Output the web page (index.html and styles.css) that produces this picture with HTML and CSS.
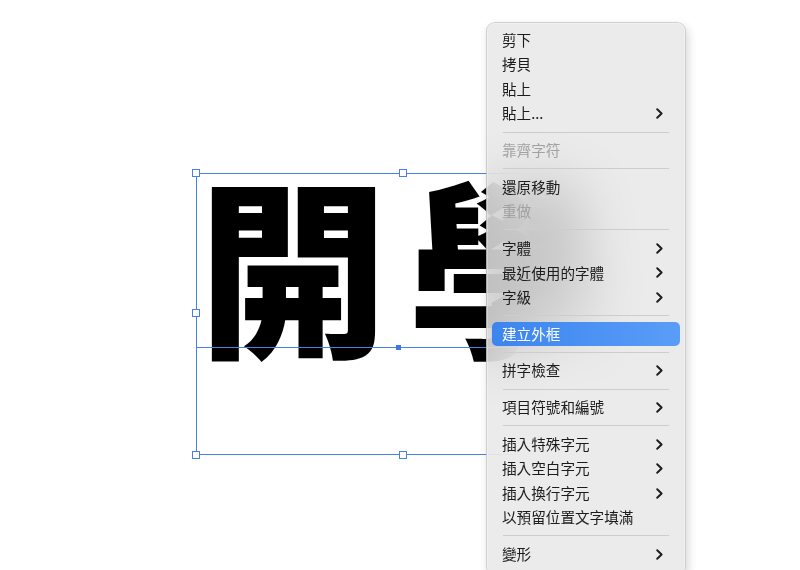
FILE: index.html
```html
<!DOCTYPE html>
<html lang="zh-Hant">
<head>
<meta charset="utf-8">
<title>文字框 – 內容選單</title>
<link rel="stylesheet" href="styles.css">
</head>
<body>
<div class="artboard">
  <div class="headline">開學</div>

  <div class="frame">
    <div class="baseline"><span class="anchor"></span></div>
    <span class="handle h-tl"></span>
    <span class="handle h-tm"></span>
    <span class="handle h-ml"></span>
    <span class="handle h-bl"></span>
    <span class="handle h-bm"></span>
  </div>

  <ul class="menu">
    <li class="item">剪下</li>
    <li class="item">拷貝</li>
    <li class="item">貼上</li>
    <li class="item sub">貼上...<svg class="chev" viewBox="0 0 7 11"><polyline points="1.2,1.2 5.6,5.5 1.2,9.8"/></svg></li>
    <li class="sep"></li>
    <li class="item off">靠齊字符</li>
    <li class="sep"></li>
    <li class="item">還原移動</li>
    <li class="item off">重做</li>
    <li class="sep"></li>
    <li class="item sub">字體<svg class="chev" viewBox="0 0 7 11"><polyline points="1.2,1.2 5.6,5.5 1.2,9.8"/></svg></li>
    <li class="item sub">最近使用的字體<svg class="chev" viewBox="0 0 7 11"><polyline points="1.2,1.2 5.6,5.5 1.2,9.8"/></svg></li>
    <li class="item sub">字級<svg class="chev" viewBox="0 0 7 11"><polyline points="1.2,1.2 5.6,5.5 1.2,9.8"/></svg></li>
    <li class="sep"></li>
    <li class="item active">建立外框</li>
    <li class="sep"></li>
    <li class="item sub">拼字檢查<svg class="chev" viewBox="0 0 7 11"><polyline points="1.2,1.2 5.6,5.5 1.2,9.8"/></svg></li>
    <li class="sep"></li>
    <li class="item sub">項目符號和編號<svg class="chev" viewBox="0 0 7 11"><polyline points="1.2,1.2 5.6,5.5 1.2,9.8"/></svg></li>
    <li class="sep"></li>
    <li class="item sub">插入特殊字元<svg class="chev" viewBox="0 0 7 11"><polyline points="1.2,1.2 5.6,5.5 1.2,9.8"/></svg></li>
    <li class="item sub">插入空白字元<svg class="chev" viewBox="0 0 7 11"><polyline points="1.2,1.2 5.6,5.5 1.2,9.8"/></svg></li>
    <li class="item sub">插入換行字元<svg class="chev" viewBox="0 0 7 11"><polyline points="1.2,1.2 5.6,5.5 1.2,9.8"/></svg></li>
    <li class="item">以預留位置文字填滿</li>
    <li class="sep"></li>
    <li class="item sub">變形<svg class="chev" viewBox="0 0 7 11"><polyline points="1.2,1.2 5.6,5.5 1.2,9.8"/></svg></li>
  </ul>
</div>
</body>
</html>
```

FILE: styles.css
```css
html, body {
  margin: 0;
  padding: 0;
  background: #ffffff;
}

.artboard {
  position: relative;
  width: 800px;
  height: 570px;
  overflow: hidden;
  background: #ffffff;
  font-family: "Noto Sans CJK TC", "Noto Sans", sans-serif;
}

/* point text placed on the artboard */
.headline {
  position: absolute;
  left: 198px;
  top: 166px;
  font-family: "Noto Sans CJK TC", sans-serif;
  font-weight: 900;
  font-size: 190px;
  line-height: 1;
  color: #000000;
  white-space: nowrap;
  letter-spacing: 20px;
}

/* selection bounding box */
.frame {
  position: absolute;
  left: 196px;
  top: 173px;
  width: 414px;
  height: 282px;
  border: 1px solid #4a7fe6;
  box-sizing: border-box;
}

.baseline {
  position: absolute;
  left: 0;
  right: 0;
  top: 173px;
  height: 1px;
  background: #4a7fe6;
}

.anchor {
  position: absolute;
  left: 199px;
  top: -2px;
  width: 5px;
  height: 5px;
  background: #3f77e4;
}

.handle {
  position: absolute;
  width: 6px;
  height: 6px;
  background: #ffffff;
  border: 1px solid #4a7fe6;
}
.h-tl { left: -5px; top: -5px; }
.h-tm { left: 202px; top: -5px; }
.h-ml { left: -5px; top: 135px; }
.h-bl { left: -5px; bottom: -5px; }
.h-bm { left: 202px; bottom: -5px; }

/* context menu */
.menu {
  position: absolute;
  left: 486px;
  top: 22px;
  width: 200px;
  margin: 0;
  padding: 5px 0 8px;
  list-style: none;
  box-sizing: border-box;
  background: rgba(230, 230, 230, 0.82);
  -webkit-backdrop-filter: blur(28px);
  backdrop-filter: blur(28px);
  border: 1px solid rgba(0, 0, 0, 0.12);
  border-radius: 9px;
  box-shadow: 0 0 0 0.5px rgba(255, 255, 255, 0.6) inset,
              2px 4px 10px rgba(0, 0, 0, 0.16);
  font-size: 14.6px;
  color: #1c1c1c;
}

.item {
  display: flex;
  align-items: center;
  justify-content: space-between;
  height: 24.5px;
  margin: 0 5px;
  padding: 0 17px 0 10px;
  border-radius: 5px;
  line-height: 1;
  white-space: nowrap;
}

.item.off {
  color: #a1a1a1;
}

.item.active {
  color: #ffffff;
  background: linear-gradient(90deg, #3c85ee 0%, #5a9df8 100%);
}

.chev {
  width: 7px;
  height: 11px;
  fill: none;
  stroke: #1c1c1c;
  stroke-width: 1.9;
  stroke-linecap: round;
  stroke-linejoin: round;
}

.sep {
  height: 1px;
  margin: 5.6px 16px;
  background: #cdcdcd;
}
```
